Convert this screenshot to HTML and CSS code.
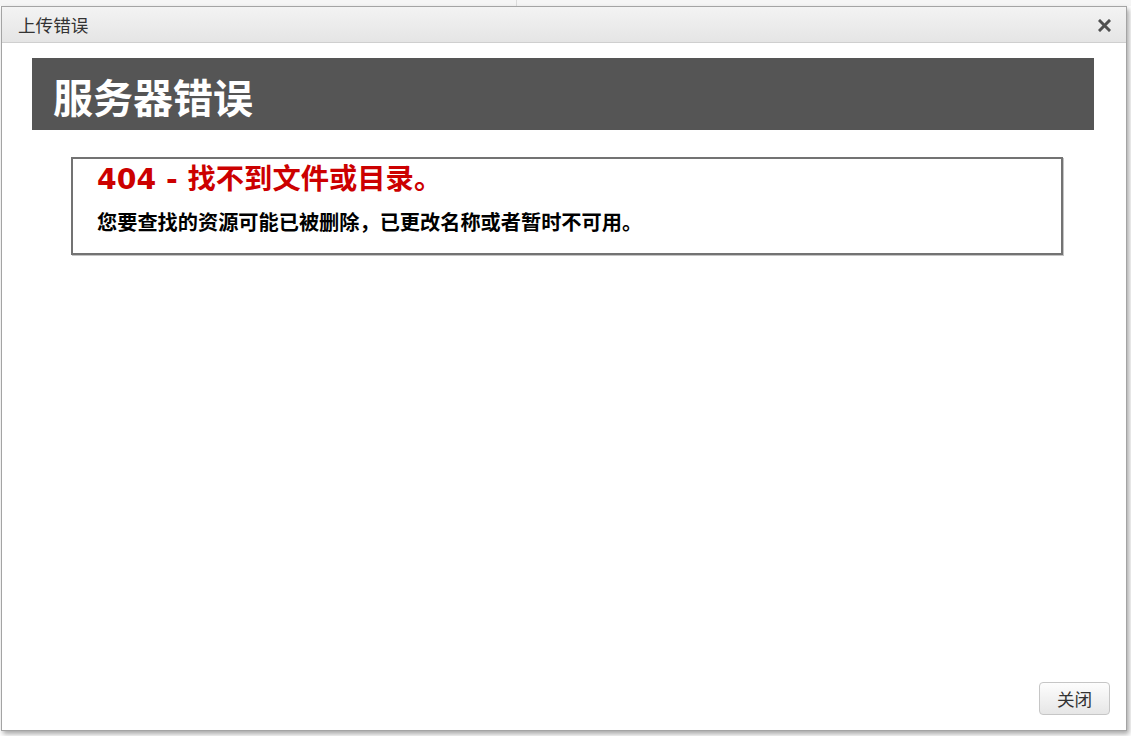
FILE: index.html
```html
<!DOCTYPE html>
<html lang="zh-CN">
<head>
    <meta charset="UTF-8">
    <title>上传错误</title>
    <link rel="stylesheet" href="styles.css">
</head>
<body>
    <div class="dialog">
        <div class="dialog-title">
            <span class="title-text">上传错误</span>
            <button class="close-button" aria-label="关闭">
                <svg width="13" height="13" viewBox="0 0 13 13">
                    <path d="M2 2 L11 11 M11 2 L2 11" stroke="#505050" stroke-width="3" stroke-linecap="square"/>
                </svg>
            </button>
        </div>
        <div class="dialog-body">
            <div class="error-header">
                <h1>服务器错误</h1>
            </div>
            <fieldset class="error-box">
                <h2>404 - 找不到文件或目录。</h2>
                <h3>您要查找的资源可能已被删除，已更改名称或者暂时不可用。</h3>
            </fieldset>
        </div>
        <div class="dialog-footer">
            <button class="footer-button">关闭</button>
        </div>
    </div>
</body>
</html>
```

FILE: styles.css
```css
body, html {
    margin: 0;
    padding: 0;
    height: 100%;
}
body {
    background:
        linear-gradient(#dcdcdc, #dcdcdc) 516px 0 / 1px 6px no-repeat,
        linear-gradient(#f5f5f5, #f5f5f5) 0 0 / 100% 6px no-repeat,
        #fff;
    padding: 6px 0 0 1px;
    box-sizing: border-box;
    font-family: "Noto Sans CJK SC", "Noto Sans", sans-serif;
    overflow: hidden;
}
.dialog {
    width: 1126px;
    height: 725px;
    box-sizing: border-box;
    border: 1px solid #a4a4a4;
    background: #fff;
    box-shadow: 2px 3px 5px rgba(0, 0, 0, 0.35);
    display: flex;
    flex-direction: column;
}
.dialog-title {
    height: 35px;
    border-bottom: 1px solid #cfcfcf;
    background: linear-gradient(#f3f3f3, #e5e5e5);
    display: flex;
    align-items: center;
    justify-content: space-between;
    padding: 0 15px 0 16px;
}
.title-text {
    font-size: 17.6px;
    color: #333;
}
.close-button {
    background: none;
    border: none;
    padding: 0;
    width: 13px;
    height: 13px;
    display: flex;
    margin-top: 2px;
}
.dialog-body {
    flex-grow: 1;
    padding: 15px 32px 0 30px;
}
.error-header {
    background-color: #555555;
    height: 72px;
    display: flex;
    align-items: center;
    padding-left: 21px;
}
.error-header h1 {
    margin: 0;
    color: #fff;
    font-size: 40px;
    font-weight: bold;
    line-height: 1;
    margin-top: 3px;
}
.error-box {
    margin: 27px 31px 0 39px;
    border: 2px solid #737373;
    box-shadow: 1px 1px 0 #c4c4c4;
    padding: 6px 22px 18px 24px;
}
.error-box h2 {
    margin: 0;
    color: #cc0000;
    font-family: "DejaVu Sans", "Noto Sans CJK SC", sans-serif;
    font-size: 28.3px;
    font-weight: bold;
    line-height: 30px;
}
.error-box h3 {
    margin: 14px 0 0;
    color: #000;
    font-size: 20.2px;
    font-weight: bold;
    line-height: 26px;
}
.dialog-footer {
    display: flex;
    justify-content: flex-end;
    padding: 0 16px 15px;
}
.footer-button {
    width: 71px;
    height: 33px;
    border: 1px solid #c6c6c6;
    border-radius: 4px;
    background: linear-gradient(#fdfdfd, #e6e6e6);
    font-family: "Noto Sans CJK SC", sans-serif;
    font-size: 17.6px;
    color: #333;
    padding: 0;
}
```
